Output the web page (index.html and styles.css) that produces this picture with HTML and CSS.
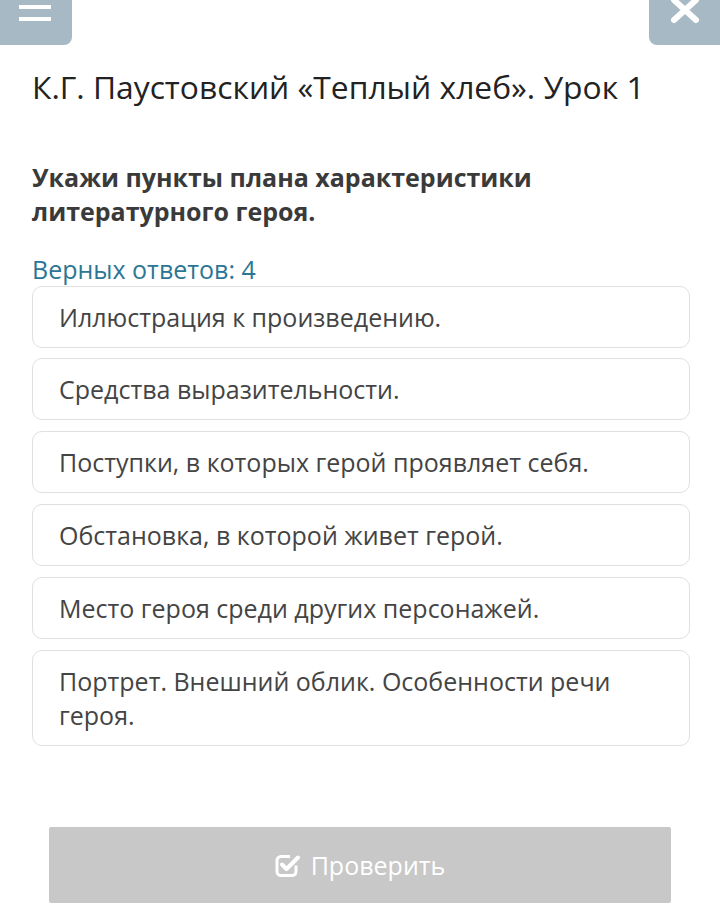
FILE: index.html
```html
<!DOCTYPE html>
<html lang="ru">
<head>
<meta charset="utf-8">
<link rel="stylesheet" href="styles.css">
</head>
<body>
<div class="topbar">
  <div class="tbtn menu">
    <svg width="34" height="24" viewBox="0 0 34 24"><rect x="0" y="2" width="32" height="4" fill="#fff"/><rect x="0" y="14" width="32" height="4" fill="#fff"/></svg>
  </div>
  <div class="tbtn close">
    <svg width="30" height="24" viewBox="0 0 30 24"><path d="M4 0 L26 20 M26 0 L4 20" stroke="#fff" stroke-width="6" stroke-linecap="round"/></svg>
  </div>
</div>
<main class="content">
  <h1 class="title">К.Г. Паустовский «Теплый хлеб». Урок 1</h1>
  <p class="question">Укажи пункты плана характеристики литературного героя.</p>
  <div class="count">Верных ответов: 4</div>
  <ul class="answers">
    <li class="answer">Иллюстрация к произведению.</li>
    <li class="answer">Средства выразительности.</li>
    <li class="answer">Поступки, в которых герой проявляет себя.</li>
    <li class="answer">Обстановка, в которой живет герой.</li>
    <li class="answer">Место героя среди других персонажей.</li>
    <li class="answer">Портрет. Внешний облик. Особенности речи героя.</li>
  </ul>
  <div class="actions">
    <button class="check">
      <svg width="26" height="24" viewBox="0 0 26 24"><path d="M15 3.5 H6 a4 4 0 0 0 -4 4 v11 a4 4 0 0 0 4 4 h11 a4 4 0 0 0 4 -4 v-6" fill="none" stroke="#fff" stroke-width="3"/><path d="M7 11.5 L11.5 16 L23 4.5" fill="none" stroke="#fff" stroke-width="4" stroke-linecap="round" stroke-linejoin="round"/></svg>
      <span>Проверить</span>
    </button>
  </div>
</main>
</body>
</html>
```
FILE: styles.css
```css
* { box-sizing: border-box; }
html, body { margin: 0; padding: 0; background: #fff; }
body { font-family: "Open Sans", "Noto Sans", sans-serif; color: #333; width: 720px; }
.topbar { display: flex; justify-content: space-between; height: 45px; }
.tbtn { background: #a6b9c5; height: 45px; width: 72px; display: flex; justify-content: center; align-items: flex-start; }
.menu { border-radius: 0 0 8px 0; padding-top: 3px; }
.close { width: 71px; border-radius: 0 0 0 8px; padding-top: 0; }
.content { padding: 20px 30px 0 32px; }
.title { font-size: 31.8px; font-weight: 400; color: #222; margin: 0; line-height: 44px; }
.question { font-size: 25px; font-weight: 700; color: #3a3a3a; margin: 51px 0 0; line-height: 34px; }
.count { font-size: 25px; color: #2b7694; margin: 26px 0 2px; line-height: 30px; }
.answers { list-style: none; margin: 0; padding: 0; display: flex; flex-direction: column; gap: 11px; }
.answer { border: 1px solid #e0e0e0; border-radius: 10px; padding: 13px 26px; font-size: 25px; line-height: 34px; color: #444; }
.answer:first-child { margin-bottom: -1px; }
.actions { padding: 81px 19px 0 17px; }
.check { width: 100%; height: 76px; background: #c8c8c8; border: none; border-radius: 2px; color: #fff; font-family: inherit; font-size: 25px; display: flex; justify-content: center; align-items: center; gap: 10px; }
```
